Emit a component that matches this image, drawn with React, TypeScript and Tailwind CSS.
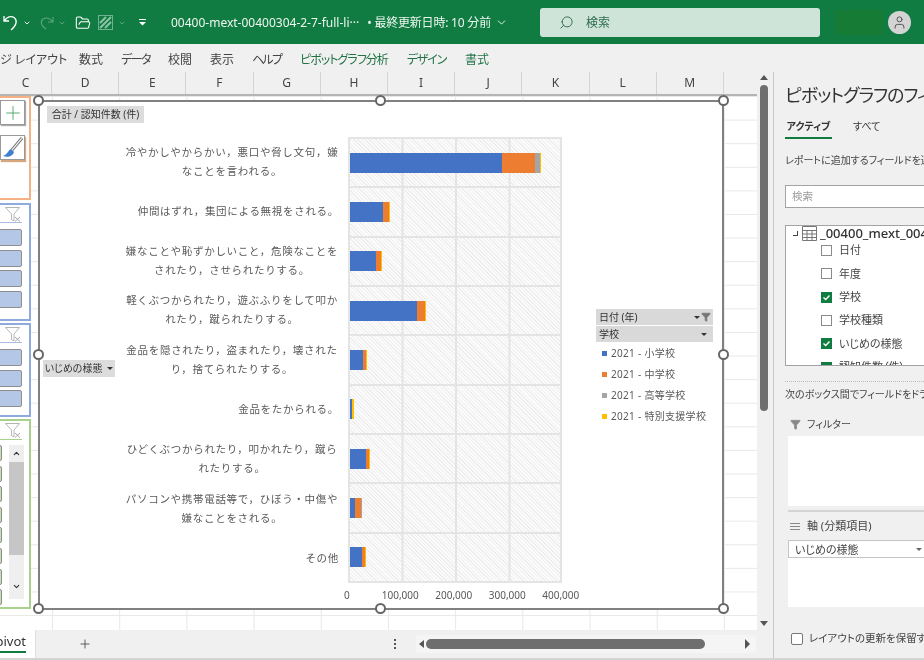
import React from "react";
import { FolderOpen, Search, User, ChevronDown, ChevronUp, Plus, Funnel } from "lucide-react";

const COLS = ["C", "D", "E", "F", "G", "H", "I", "J", "K", "L", "M"];
const RIBBON = [
  { t: "数式", c: "text-[#444]" },
  { t: "データ", c: "text-[#444] tracking-[-1.5px]" },
  { t: "校閲", c: "text-[#444]" },
  { t: "表示", c: "text-[#444]" },
  { t: "ヘルプ", c: "text-[#444] tracking-[-1.8px]" },
  { t: "ピボットグラフ分析", c: "text-[#217346] tracking-[-1px] ml-[1px]" },
  { t: "デザイン", c: "text-[#217346] tracking-[-1.2px] ml-[1px]" },
  { t: "書式", c: "text-[#217346] ml-[1px]" },
];
const BLUE = "#4472c4", ORANGE = "#ed7d31", GRAY = "#a5a5a5", YELLOW = "#ffc000";
const ROWS: { l: string[]; right?: boolean; v: number[] }[] = [
  { l: ["冷やかしやからかい，悪口や脅し文句，嫌", "なことを言われる。"], v: [152, 33, 5, 1] },
  { l: ["仲間はずれ，集団による無視をされる。"], right: true, v: [33, 6, 0, 1] },
  { l: ["嫌なことや恥ずかしいこと，危険なことを", "されたり，させられたりする。"], v: [26, 5, 0, 1] },
  { l: ["軽くぶつかられたり，遊ぶふりをして叩か", "れたり，蹴られたりする。"], v: [67, 8, 0, 1] },
  { l: ["金品を隠されたり，盗まれたり，壊された", "り，捨てられたりする。"], v: [13, 3, 0, 1] },
  { l: ["金品をたかられる。"], right: true, v: [2, 0, 0, 2] },
  { l: ["ひどくぶつかられたり，叩かれたり，蹴ら", "れたりする。"], v: [16, 3, 0, 1] },
  { l: ["パソコンや携帯電話等で，ひぼう・中傷や", "嫌なことをされる。"], v: [5, 6, 1, 0] },
  { l: ["その他"], right: true, v: [12, 3, 0, 1] },
];
const FIELDS = [
  { t: "日付", on: false },
  { t: "年度", on: false },
  { t: "学校", on: true },
  { t: "学校種類", on: false },
  { t: "いじめの様態", on: true },
  { t: "認知件数（件）", on: true },
];
const LEGEND = [
  { t: "2021 - 小学校", c: "bg-[#4472c4]" },
  { t: "2021 - 中学校", c: "bg-[#ed7d31]" },
  { t: "2021 - 高等学校", c: "bg-[#a5a5a5]" },
  { t: "2021 - 特別支援学校", c: "bg-[#ffc000]" },
];

function Caret({ cls = "border-t-[#333]" }: { cls?: string }) {
  return <span className={`inline-block w-0 h-0 border-x-[3px] border-x-transparent border-t-[3px] ${cls}`} />;
}

function SlicerFunnel() {
  return (
    <svg className="mr-[1px] mt-[2px]" width="16" height="15" viewBox="0 0 16 15" fill="none" stroke="#b5b5b5" strokeWidth="1">
      <path d="M0.5 0.5H14.5L9 7V14L6.5 12.5V7Z" fill="#fff" />
      <path d="M10 10L15 14.5M15 10L10 14.5" stroke="#a8a8a8" />
    </svg>
  );
}

function Handle({ c }: { c: string }) {
  return <span className={`absolute w-[11px] h-[11px] rounded-full border-2 border-[#666] bg-white ${c}`} />;
}

function Check({ on }: { on: boolean }) {
  return on ? (
    <span className="w-[11px] h-[11px] bg-[#107c41] flex items-center justify-center shrink-0">
      <svg width="9" height="9" viewBox="0 0 9 9" fill="none" stroke="#fff" strokeWidth="1.4">
        <path d="M1.5 4.5L3.7 6.5L7.5 2.5" />
      </svg>
    </span>
  ) : (
    <span className="w-[11px] h-[11px] bg-white border border-[#8a8a8a] shrink-0" />
  );
}

export default function App() {
  const font = "font-['Noto_Sans','Noto_Sans_CJK_JP',sans-serif]";
  return (
    <div className={`relative w-[924px] h-[660px] overflow-hidden flex flex-col bg-[#f0f0f0] blur-[0.55px] ${font} [font-feature-settings:'palt']`}>
      {/* title bar */}
      <div className="h-[44px] shrink-0 bg-[#107c41] flex items-center pt-[1px] text-white">
        <svg className="ml-[3px]" width="16" height="17" viewBox="0 0 16 17" fill="none" stroke="#fff" strokeWidth="1.3">
          <path d="M1 2V7H6M1.5 6.5C4 3 8 1.5 11 3.5C14.5 6 14 11 8 16" />
        </svg>
        <ChevronDown className="ml-[4px]" size={8} strokeWidth={3} color="#e5efe9" />
        <svg className="ml-[9px]" width="14" height="15" viewBox="0 0 14 15" fill="none" stroke="#5da57f" strokeWidth="1.1">
          <path d="M13 2V7H8M12.5 6.5C10 3 6 2 3 4C0 6.5 1 11 6 14" />
        </svg>
        <ChevronDown className="ml-[4px]" size={8} strokeWidth={3} color="#5da57f" />
        <FolderOpen className="ml-[9px]" size={16} strokeWidth={1.6} color="#fff" />
        <svg className="ml-[7px]" width="15" height="15" viewBox="0 0 15 15">
          <rect x="0.5" y="0.5" width="14" height="14" fill="none" stroke="#70b191" />
          <path d="M2 13L13 2M2 8L8 2M7 13L13 7" stroke="#8cc3a7" strokeWidth="2" />
        </svg>
        <ChevronDown className="ml-[5px]" size={8} strokeWidth={3} color="#5da57f" />
        <svg className="ml-[13px]" width="7" height="7" viewBox="0 0 7 7">
          <path d="M0 0.5H7" stroke="#fff" />
          <path d="M0 3L3.5 6.5L7 3Z" fill="#fff" />
        </svg>
        <span className="ml-[25px] text-[12px] whitespace-nowrap text-[#eef6f1]">00400-mext-00400304-2-7-full-li···</span>
        <span className="ml-[8px] text-[12px] whitespace-nowrap text-[#eef6f1] tracking-[-0.2px]">• 最終更新日時: 10 分前</span>
        <ChevronDown className="ml-[4px]" size={13} strokeWidth={1.6} color="#fff" />
        <div className="ml-[32px] w-[280px] h-[29px] rounded-[3px] bg-[#cfe4d9] flex items-center pl-[19px] text-[#2f6b4f]">
          <Search size={15} strokeWidth={1.5} className="-scale-x-100" />
          <span className="ml-[12px] text-[12px]">検索</span>
        </div>
        <div className="ml-[15px] w-[48px] h-[25px] bg-[#157b35]" />
        <div className="ml-[5px] w-[23px] h-[23px] rounded-full bg-[#d4d4d4] flex items-center justify-center">
          <User size={15} strokeWidth={1.6} color="#555" />
        </div>
      </div>

      {/* ribbon tabs */}
      <div className="h-[28px] shrink-0 flex items-center pt-[3px] gap-[18px] text-[12px] bg-[#f0f0f0] whitespace-nowrap">
        <span className="w-[61px] text-[#444] text-right shrink-0">ジ レイアウト</span>
        {RIBBON.map((r) => (
          <span key={r.t} className={r.c}>{r.t}</span>
        ))}
      </div>

      {/* main */}
      <div className="flex-1 min-h-0 flex">
        <div className="w-[773px] shrink-0 flex flex-col">
          <div className="flex-1 min-h-0 flex">
            <div className="w-[757px] shrink-0 flex flex-col">
              {/* column headers */}
              <div className="h-[24px] shrink-0 flex border-b-2 border-[#b4b4b4] text-[12px] text-[#444]">
                {COLS.map((c, i) => (
                  <div key={c} className={`${i === 0 ? "w-[52px]" : "w-[67.2px]"} shrink-0 flex items-center justify-center border-r border-[#d4d4d4]`}>{c}</div>
                ))}
              </div>
              {/* sheet */}
              <div className="relative flex-1 bg-white bg-[linear-gradient(to_right,#e8e8e8_1px,transparent_1px),linear-gradient(to_bottom,#e8e8e8_1px,transparent_1px)] bg-[size:67.2px_23.6px] bg-[position:52px_0px]">
                {/* slicer boxes */}
                <div className="absolute left-[-4px] top-0 w-[35px] h-[104px] bg-white border-2 border-[#f4b183]">
                  <div className="ml-[2px] mt-[2px] w-[25px] h-[25px] bg-white border border-[#999] shadow-[1px_1px_1px_#aaa] flex items-center justify-center">
                    <Plus size={22} strokeWidth={1} color="#4aa564" />
                  </div>
                  <div className="ml-[2px] mt-[10px] w-[25px] h-[25px] bg-white border border-[#999] shadow-[1px_2px_1px_#d9a77e] flex items-center justify-center">
                    <svg width="22" height="24" viewBox="0 0 22 24" fill="none">
                      <path d="M20 2L10 14" stroke="#666" strokeWidth="3" />
                      <path d="M20 2L10 14" stroke="#eee" strokeWidth="1.2" />
                      <path d="M9 13C6 14 6 18 1 20C6 22 11 20 12 16Z" fill="#3f7fd0" />
                    </svg>
                  </div>
                </div>
                <div className="absolute left-[-4px] top-[107px] w-[35px] h-[118px] bg-white border-2 border-[#8faadc]">
                  <div className="h-[18px] mr-[7px] border-b border-[#a9bfe6] flex justify-end"><SlicerFunnel /></div>
                  <div className="mt-[6px] flex flex-col gap-[3.5px]">
                    {[0, 1, 2, 3].map((i) => (
                      <div key={i} className="h-[17px] w-[24px] bg-[#b4c7e7] border border-[#8e8e8e] rounded-[2px]" />
                    ))}
                  </div>
                </div>
                <div className="absolute left-[-4px] top-[227px] w-[35px] h-[94px] bg-white border-2 border-[#8faadc]">
                  <div className="h-[18px] mr-[7px] border-b border-[#a9bfe6] flex justify-end"><SlicerFunnel /></div>
                  <div className="mt-[6px] flex flex-col gap-[3.5px]">
                    {[0, 1, 2].map((i) => (
                      <div key={i} className="h-[17px] w-[24px] bg-[#b4c7e7] border border-[#8e8e8e] rounded-[2px]" />
                    ))}
                  </div>
                </div>
                <div className="absolute left-[-4px] top-[323px] w-[35px] h-[190px] bg-white border-2 border-[#a9d18e]">
                  <div className="h-[19px] mr-[7px] border-b border-[#a9d18e] flex justify-end"><SlicerFunnel /></div>
                  <div className="mt-[5px] flex gap-[5px]">
                    <div className="flex flex-col gap-[4.6px]">
                      {[0, 1, 2, 3, 4, 5, 6, 7].map((i) => (
                        <div key={i} className="h-[16px] w-[4px] bg-[#c5e0b4] border border-[#8e8e8e] rounded-[2px]" />
                      ))}
                    </div>
                    <div className="ml-[2px] w-[15px] h-[154px] bg-[#efefef] flex flex-col items-center">
                      <div className="h-[17px] flex items-center"><ChevronUp size={9} strokeWidth={3} color="#333" /></div>
                      <div className="w-full h-[93px] bg-[#c6c6c6]" />
                      <div className="flex-1 flex items-center pt-[18px]"><ChevronDown size={9} strokeWidth={3} color="#333" /></div>
                    </div>
                  </div>
                </div>

                {/* chart */}
                <div className="absolute left-[38px] top-[4px] w-[686px] h-[510px] bg-white border-2 border-[#808080] flex flex-col text-[#595959]">
                  <div className="ml-[7px] mt-[4px] w-[97px] h-[17px] bg-[#dcdcdc] flex items-center justify-center text-[10px] text-[#333] whitespace-nowrap">合計 / 認知件数 (件)</div>
                  <div className="mt-[14px] flex items-start">
                    <div className="ml-[3px] mt-[223px] w-[72px] h-[17px] bg-[#dcdcdc] flex items-center justify-center gap-[5px] text-[10px] text-[#333] whitespace-nowrap shrink-0">
                      いじめの様態 <Caret />
                    </div>
                    <div className="ml-[4px] w-[222px] h-[446px] shrink-0 flex flex-col text-[10.5px] leading-[19px] tracking-[0.7px] whitespace-nowrap [font-feature-settings:normal]">
                      {ROWS.map((r, i) => (
                        <div key={i} className={`flex-1 flex flex-col justify-center ${r.right ? "text-right pr-[2px]" : "text-center pl-[4px]"}`}>
                          {r.l.map((t) => <div key={t}>{t}</div>)}
                        </div>
                      ))}
                    </div>
                    <div className="ml-[7px] w-[214px] h-[446px] shrink-0 flex flex-col border-2 border-[#e4e4e4] bg-[linear-gradient(to_right,transparent_51.5px,#e4e4e4_51.5px,#e4e4e4_53.5px),repeating-linear-gradient(45deg,#eeeeee_0px,#eeeeee_1px,#fbfbfb_1px,#fbfbfb_2.6px)] bg-[size:53.5px_100%,auto]">
                      {ROWS.map((r, i) => (
                        <div key={i} className="flex-1 flex items-center border-b-2 last:border-b-0 border-[#e4e4e4]">
                          <div className="flex h-[20px]">
                            {r.v.map((w, j) => (
                              <div key={j} style={{ width: w, background: [BLUE, ORANGE, GRAY, YELLOW][j] }} />
                            ))}
                          </div>
                        </div>
                      ))}
                    </div>
                    <div className="ml-[34px] mt-[172px] w-[117px] shrink-0">
                      <div className="h-[16px] bg-[#d9d9d9] flex items-center justify-between pl-[3px] pr-[2px] text-[10px] text-[#333]">
                        <span>日付 (年)</span>
                        <span className="flex items-center gap-[1px]"><Caret /><Funnel size={10} color="#777" fill="#777" /></span>
                      </div>
                      <div className="mt-[1px] h-[16px] bg-[#d9d9d9] flex items-center justify-between pl-[3px] pr-[6px] text-[10px] text-[#333]">
                        <span>学校</span><Caret />
                      </div>
                      <div className="mt-[1px] flex flex-col">
                        {LEGEND.map((l) => (
                          <div key={l.t} className="h-[21px] flex items-center pl-[6px] text-[10px] whitespace-nowrap tracking-[0.3px]">
                            <span className={`w-[5px] h-[5px] ${l.c}`} />
                            <span className="ml-[4px]">{l.t}</span>
                          </div>
                        ))}
                      </div>
                    </div>
                  </div>
                  <div className="mt-[5px] ml-[280px] flex text-[10px]">
                    {["0", "100,000", "200,000", "300,000", "400,000"].map((t) => (
                      <div key={t} className="w-[53.5px] text-center shrink-0">{t}</div>
                    ))}
                  </div>
                  <Handle c="left-[-7px] top-[-7px]" />
                  <Handle c="left-[335px] top-[-7px]" />
                  <Handle c="left-[678px] top-[-7px]" />
                  <Handle c="left-[-7px] top-[247px]" />
                  <Handle c="left-[678px] top-[247px]" />
                  <Handle c="left-[-7px] top-[501px]" />
                  <Handle c="left-[335px] top-[501px]" />
                  <Handle c="left-[678px] top-[501px]" />
                </div>
              </div>
            </div>
            {/* vertical scrollbar */}
            <div className="w-[16px] shrink-0 flex flex-col items-center pr-[3px]">
              <span className="mt-[3px] w-0 h-0 border-x-[4px] border-x-transparent border-b-[5px] border-b-[#555]" />
              <div className="mt-[5px] w-[8px] h-[326px] rounded-[4px] bg-[#6e6e6e]" />
              <div className="flex-1" />
              <span className="mb-[4px] w-0 h-0 border-x-[4px] border-x-transparent border-t-[5px] border-t-[#555]" />
            </div>
          </div>
          {/* sheet tabs */}
          <div className="h-[28px] shrink-0 flex items-center relative">
            <div className="w-[36px] h-full bg-white flex flex-col items-end pr-[9px] pt-[1px] text-[13px] leading-[20px] text-[#333] shrink-0 border-r border-[#ddd]">
              <span>pivot</span>
              <span className="w-[28px] h-[2px] bg-[#107c41]" />
            </div>
            <Plus className="ml-[42px]" size={14} strokeWidth={1.6} color="#555" />
            <div className="ml-[302px] flex flex-col gap-[2px]">
              <span className="w-[2px] h-[2px] bg-[#555]" />
              <span className="w-[2px] h-[2px] bg-[#555]" />
              <span className="w-[2px] h-[2px] bg-[#555]" />
            </div>
            <div className="ml-[20px] w-[340px] h-[18px] rounded-[3px] bg-[#f5f5f5] flex items-center pl-[3px]">
              <span className="w-0 h-0 border-y-[4px] border-y-transparent border-r-[5px] border-r-[#555]" />
              <div className="ml-[2px] w-[279px] h-[10px] rounded-[5px] bg-[#6e6e6e]" />
              <span className="ml-[40px] w-0 h-0 border-y-[5px] border-y-transparent border-l-[5px] border-l-[#555]" />
            </div>
          </div>
        </div>

        {/* field pane */}
        <div className="flex-1 min-w-0 overflow-hidden border-l border-[#c8c8c8] text-[#444] whitespace-nowrap">
          <div className="w-[320px] pl-[11px] flex flex-col">
            <div className="mt-[9px] h-[28px] text-[18px] leading-[28px] text-[#333] tracking-[-1px]">ピボットグラフのフィールド</div>
            <div className="mt-[10px] flex text-[10px] font-bold text-[#333]">
              <span className="w-[47px] text-center">アクティブ</span>
              <span className="ml-[21px] font-normal">すべて</span>
            </div>
            <div className="mt-[3px] w-[47px] h-[2px] bg-[#107c41]" />
            <div className="mt-[14px] text-[10px]">レポートに追加するフィールドを選択してください:</div>
            <div className="mt-[17px] h-[23px] border border-[#a3a3a3] bg-white flex items-center pl-[6px] text-[10.5px] text-[#999]">検索</div>
            <div className="mt-[17px] h-[141px] border border-[#a3a3a3] bg-white overflow-hidden">
              <div className="flex items-center h-[11px] mt-[2px]">
                <span className="ml-[7px] w-[5px] h-[5px] border-r border-b border-[#444] mr-[4px]" />
                <svg width="15" height="15" viewBox="0 0 15 15" fill="none" stroke="#777"><path d="M0.5 0.5H14.5V14.5H0.5ZM0.5 4.5H14.5M0.5 8H14.5M0.5 11.5H14.5M5 4.5V14.5M10 4.5V14.5" /></svg>
                <span className="ml-[3px] text-[13px] font-medium text-[#333]">_00400_mext_00400304</span>
              </div>
              {FIELDS.map((f) => (
                <div key={f.t} className="h-[23.3px] flex items-center pl-[35px] text-[11px]">
                  <Check on={f.on} />
                  <span className="ml-[7px]">{f.t}</span>
                </div>
              ))}
            </div>
            <div className="mt-[15px] border-t border-dotted border-[#bbb]" />
            <div className="mt-[5px] text-[10px]">次のボックス間でフィールドをドラッグしてください:</div>
            <div className="mt-[14px] ml-[5px] h-[16px] flex items-center text-[10px]">
              <Funnel size={11} color="#888" fill="#888" />
              <span className="ml-[6px]">フィルター</span>
            </div>
            <div className="mt-[4px] ml-[3px] h-[70px] bg-white" />
            <div className="mt-[4px] ml-[3px] border-t-2 border-[#d4d4d4]" />
            <div className="mt-[6px] ml-[5px] h-[16px] flex items-center text-[11px]">
              <span className="flex flex-col gap-[2px] w-[10px]">
                <span className="h-[1px] bg-[#888]" /><span className="h-[1px] bg-[#888]" /><span className="h-[1px] bg-[#888]" />
              </span>
              <span className="ml-[7px]">軸 (分類項目)</span>
            </div>
            <div className="mt-[6px] ml-[3px] h-[67px] bg-white">
              <div className="w-[136px] h-[18px] border-y border-l border-[#c4c4c4] pl-[6px] text-[11px] leading-[17px] flex items-center justify-between pr-[2px]">
                いじめの様態 <Caret cls="border-t-[#666]" />
              </div>
            </div>
            <div className="mt-[24px] ml-[6px] flex items-center text-[10.5px]">
              <span className="w-[12px] h-[12px] rounded-[2px] border border-[#777] bg-white" />
              <span className="ml-[6px]">レイアウトの更新を保留する</span>
            </div>
          </div>
        </div>
      </div>
      <div className="h-[2px] shrink-0 bg-[#d4d4d4]" />
    </div>
  );
}
